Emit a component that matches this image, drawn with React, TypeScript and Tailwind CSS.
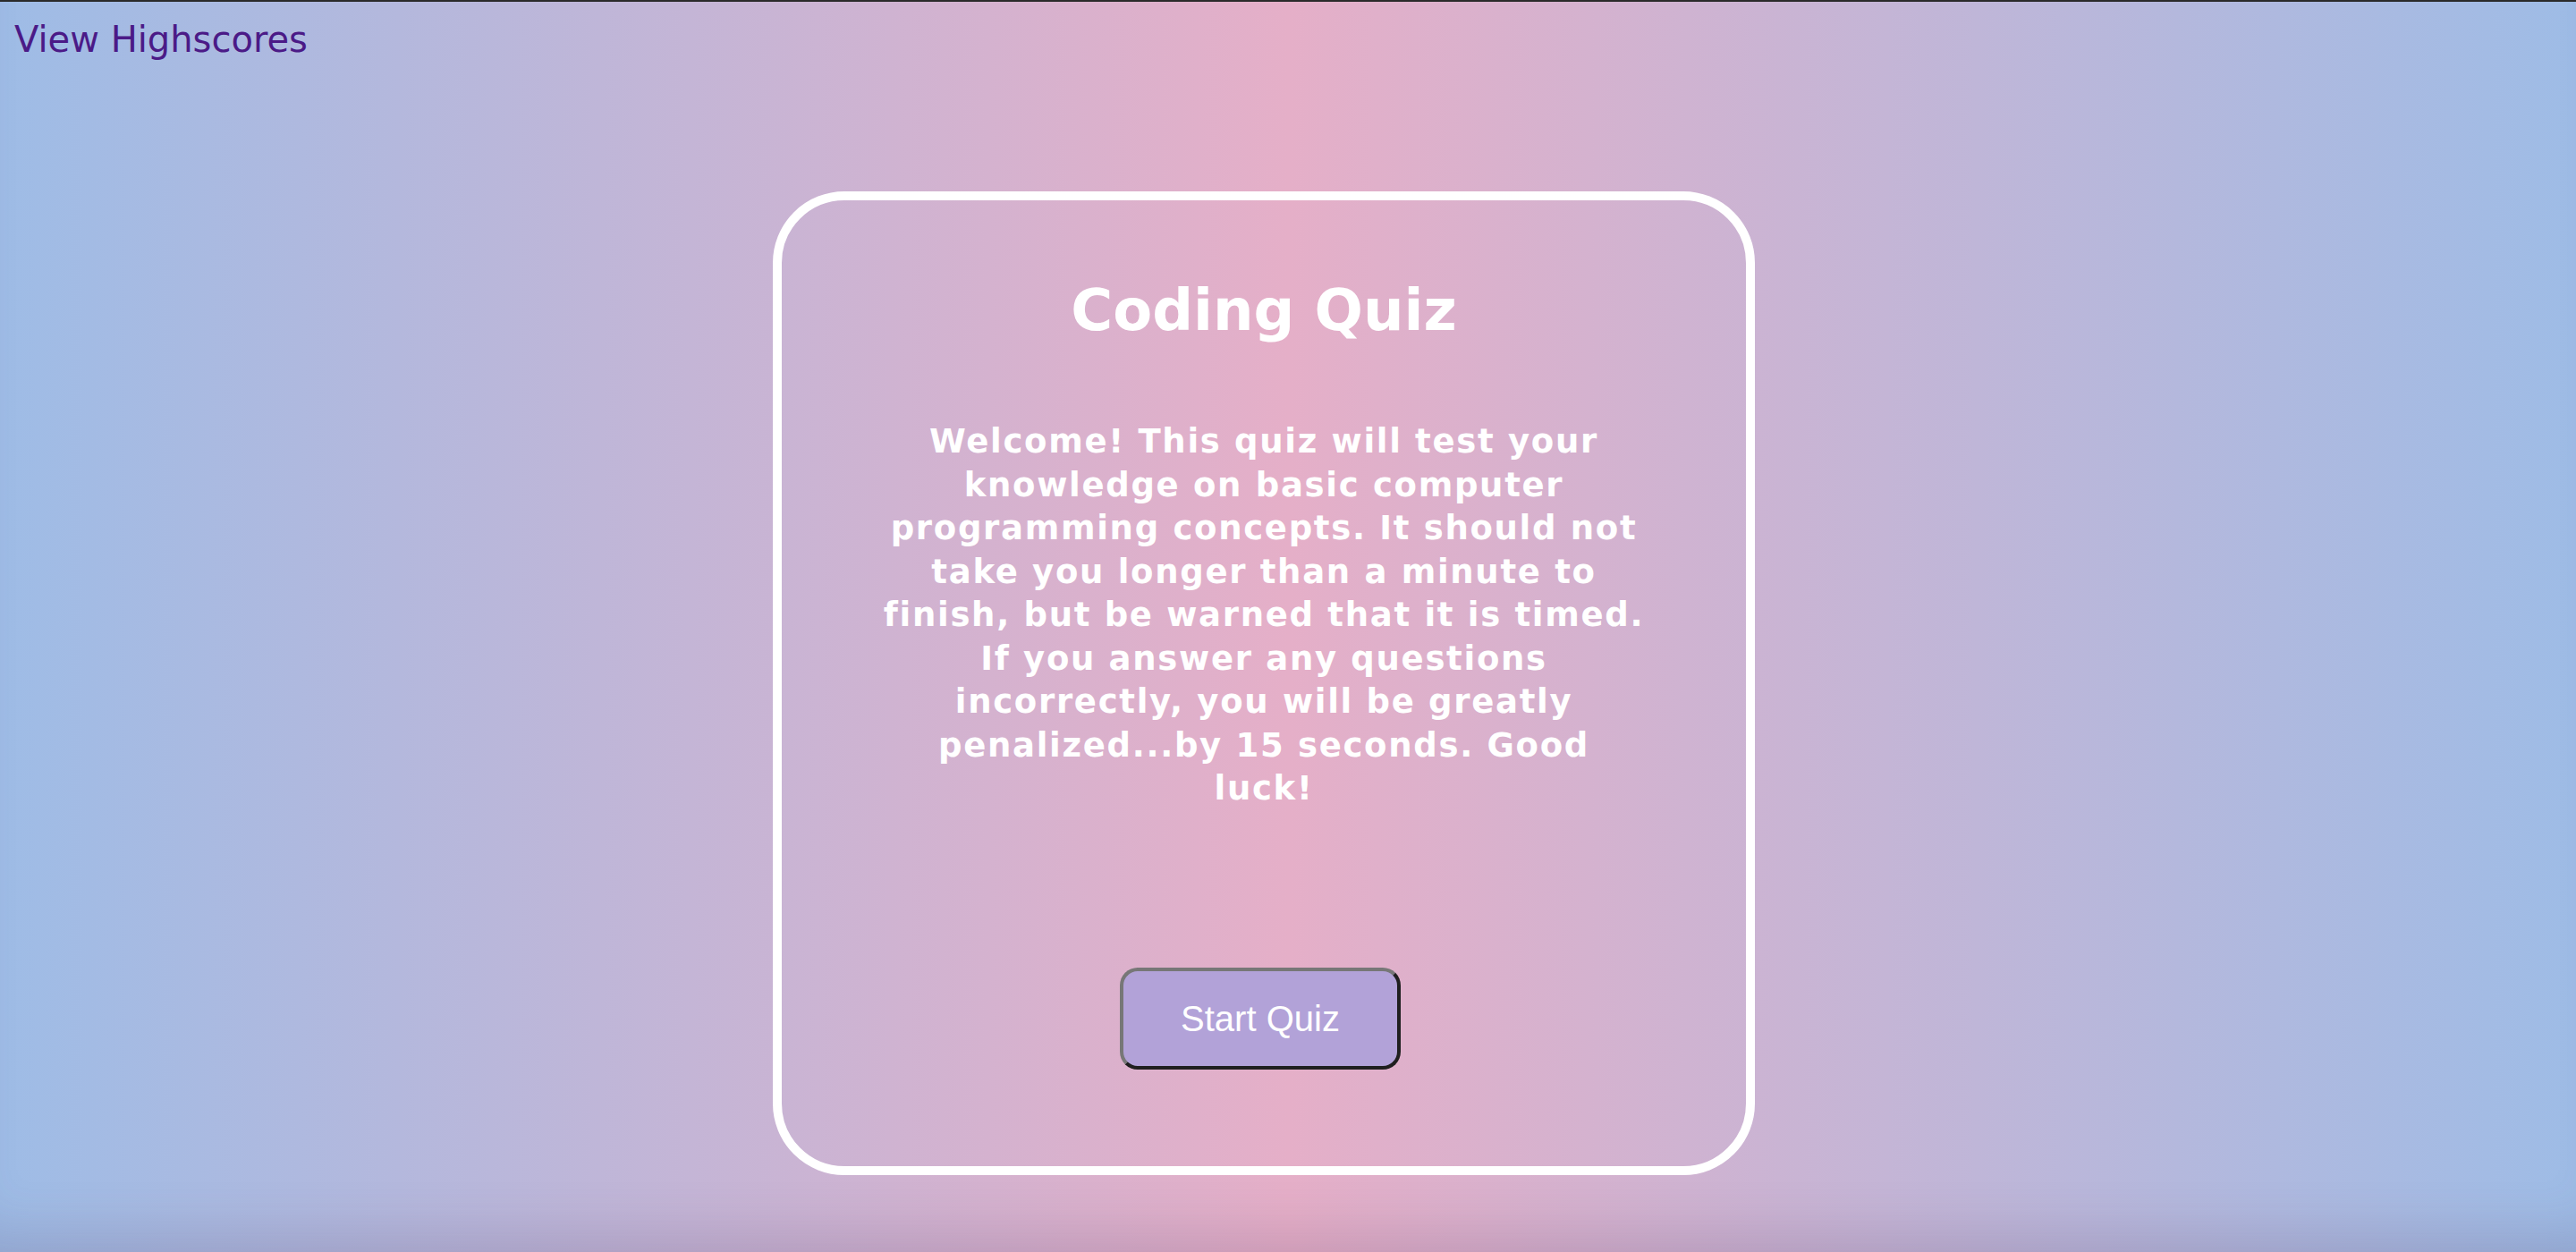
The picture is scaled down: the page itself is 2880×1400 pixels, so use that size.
export default function App() {
  return (
    <div className="relative h-[1400px] w-full overflow-hidden border-t-2 border-[#2a2a2a] bg-[linear-gradient(to_right,#9ebce6,#e5afc8,#9ebce6)] shadow-[inset_0_-60px_60px_-40px_rgba(90,60,100,0.2)]">
      <header className="pl-4 pt-[18px]">
        <a
          href="#"
          className="font-['DejaVu_Sans',Verdana,sans-serif] text-[40px] leading-[48px] text-[#4b1a87]"
        >
          View Highscores
        </a>
      </header>

      <main className="ml-[864px] mt-[146px] h-[1100px] w-[1098px] rounded-[80px] border-[10px] border-white pt-[83px] font-['DejaVu_Sans',Verdana,sans-serif] text-white">
        <h1 className="text-center text-[64px] font-bold leading-[80px]">Coding Quiz</h1>
        <p className="mx-auto mt-[83px] w-[900px] whitespace-nowrap text-center text-[37px] font-bold leading-[48.5px] tracking-[1.7px]">
          Welcome! This quiz will test your
          <br />
          knowledge on basic computer
          <br />
          programming concepts. It should not
          <br />
          take you longer than a minute to
          <br />
          finish, but be warned that it is timed.
          <br />
          If you answer any questions
          <br />
          incorrectly, you will be greatly
          <br />
          penalized...by 15 seconds. Good
          <br />
          luck!
        </p>
        <div className="mt-[175px] flex justify-center pr-[8px]">
          <button
            type="button"
            className="h-[114px] w-[314px] rounded-[20px] border-4 border-t-[#777777] border-l-[#777777] border-b-[#1f1f1f] border-r-[#1f1f1f] bg-[#b2a2d8] font-['Liberation_Sans',Arial,sans-serif] text-[40px] text-white"
          >
            Start Quiz
          </button>
        </div>
      </main>
    </div>
  );
}
